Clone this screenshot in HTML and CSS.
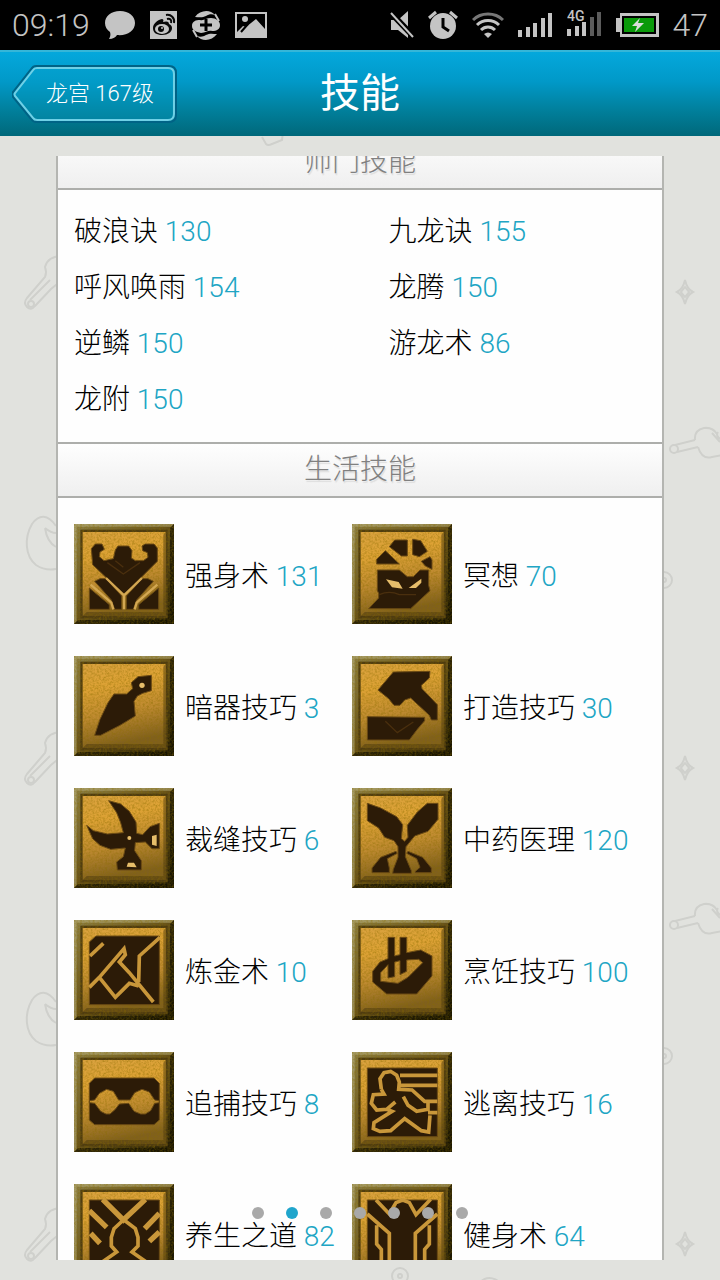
FILE: index.html
```html
<!DOCTYPE html>
<html lang="zh-CN">
<head>
    <meta charset="UTF-8">
    <meta name="viewport" content="width=device-width, initial-scale=1">
    <title>技能</title>
    <link rel="stylesheet" href="styles.css">
</head>
<body>

    <!-- shared stone plate behind every skill icon -->
    <svg class="defs" aria-hidden="true">
        <defs>
            <linearGradient id="frame" x1="0" y1="0" x2="1" y2="1">
                <stop offset="0" stop-color="#8d8045"/>
                <stop offset="0.5" stop-color="#655018"/>
                <stop offset="1" stop-color="#1c1703"/>
            </linearGradient>
            <linearGradient id="face" x1="0" y1="0" x2="0.2" y2="1">
                <stop offset="0" stop-color="#d9a13f"/>
                <stop offset="0.3" stop-color="#dda235"/>
                <stop offset="0.65" stop-color="#bd8930"/>
                <stop offset="1" stop-color="#80601d"/>
            </linearGradient>
            <filter id="grain" x="0" y="0" width="1" height="1">
                <feTurbulence type="fractalNoise" baseFrequency="0.16" numOctaves="3" seed="4"/>
                <feColorMatrix values="0 0 0 0 0.25  0 0 0 0 0.15  0 0 0 0 0  1.6 0 0 0 -0.6"/>
            </filter>
            <symbol id="plate" viewBox="0 0 300 300">
                <rect width="300" height="300" fill="url(#frame)"/>
                <path d="M0 0H300L292 8H8V292L0 300z" fill="#b5ad7c" opacity="0.6"/>
                <path d="M300 0V300H0L12 288H288V12z" fill="#161302" opacity="0.7"/>
                <rect x="19" y="17" width="262" height="266" fill="#4f3c10"/>
                <rect x="26" y="24" width="249" height="252" fill="url(#face)"/>
                <path d="M26 276H275V24L268 32V264H38z" fill="#4a370c" opacity="0.5"/>
                <rect width="300" height="300" filter="url(#grain)" opacity="0.6"/>
            </symbol>
        </defs>
    </svg>

    <div class="status-bar">
        <div class="status-group">
            <span class="clock">09:19</span>
            <svg width="32" height="32" viewBox="0 0 32 32"><path d="M16 2C7 2 1 7 1 14c0 4 2 7 5 9 1 3 0 5-1 7 4 0 7-2 8-4 10 1 18-4 18-12C31 7 25 2 16 2z" fill="#c4c4c4"/></svg>
            <svg width="27" height="28" viewBox="0 0 27 28">
                <rect width="27" height="28" fill="#c4c4c4"/>
                <path d="M12 8c-5 1-9 5-9 9 0 5 4 7 9 7 6 0 10-3 10-7 0-2-1-3-3-4 0-3-3-3-6-2 1-2 0-3-1-3z" fill="#080808"/>
                <ellipse cx="12" cy="18" rx="7" ry="5" fill="#c4c4c4"/>
                <circle cx="11" cy="18" r="3" fill="#080808"/>
                <circle cx="12" cy="17" r="1" fill="#c4c4c4"/>
                <path d="M17 8c3-1 5 1 4 4M16 4c5-1 9 3 8 8" fill="none" stroke="#080808" stroke-width="2"/>
            </svg>
            <svg width="30" height="30" viewBox="0 0 30 30">
                <path d="M1 16C1 11 5 10 9 10c4 1 6-2 11-2 5 0 9 3 9 7s-3 6-8 6c-4-1-6 2-11 2-5-1-9-3-9-7z" fill="#c4c4c4"/>
                <path d="M4 7C9 0 19-1 24 5c-3-1-6-1-9 1-4 2-7 1-11 1zM26 24c-5 7-15 8-20 2 3 1 6 1 9-1 4-2 7-1 11-1z" fill="#c4c4c4"/>
                <path d="M24 4l4 7M6 27l-4-7" stroke="#c4c4c4" stroke-width="2"/>
                <path d="M15 9v12M9 15h12" stroke="#000" stroke-width="3"/>
            </svg>
            <svg width="32" height="26" viewBox="0 0 32 26">
                <rect x="1" y="1" width="30" height="24" fill="#000" stroke="#c4c4c4" stroke-width="2"/>
                <path d="M2 20l6-6 3 1 10-8 9 10v7H2z" fill="#c4c4c4"/>
                <path d="M6 20l7-8" stroke="#000" stroke-width="2"/>
                <circle cx="10" cy="7" r="3" fill="#c4c4c4"/>
            </svg>
        </div>
        <div class="status-group">
            <svg width="24" height="28" viewBox="0 0 24 28">
                <path d="M1 9h7l10-9v27l-10-8H1z" fill="#c4c4c4"/>
                <path d="M0 1l24 25" stroke="#000" stroke-width="6"/>
                <path d="M1 2l22 24" stroke="#c4c4c4" stroke-width="2"/>
            </svg>
            <svg width="30" height="30" viewBox="0 0 30 30">
                <circle cx="15" cy="16" r="13" fill="#c4c4c4"/>
                <path d="M1 8l7-6M29 8l-7-6" stroke="#c4c4c4" stroke-width="3"/>
                <path d="M15 8v9l6 4" fill="none" stroke="#000" stroke-width="3"/>
            </svg>
            <svg width="32" height="26" viewBox="0 0 32 26" fill="none" stroke="#c4c4c4" stroke-width="3">
                <path d="M1 8C9 0 23 0 31 8" stroke="#777"/>
                <path d="M5 13c6-6 16-6 22 0M9 18c4-4 10-4 14 0"/>
                <path d="M16 26l-4-4q4-3 8 0z" fill="#c4c4c4" stroke="none"/>
            </svg>
            <svg width="35" height="26" viewBox="0 0 35 26" fill="#c4c4c4"><path d="M0 18h4v7H0zM8 15h4v10H8zM15 11h4v14h-4zM23 6h4v19h-4zM30 1h4v24h-4z"/></svg>
            <svg width="35" height="30" viewBox="0 0 35 30" fill="#c4c4c4">
                <path d="M0 19h4v7H0zM8 16h4v10H8zM15 12h4v14h-4z"/>
                <path d="M23 7h4v19h-4zM30 2h4v24h-4z" fill="#5c5c5c"/>
                <text class="net-label" x="0" y="11">4G</text>
            </svg>
            <svg width="43" height="24" viewBox="0 0 43 24">
                <path d="M0 5h4V0h39v24H4v-5H0z" fill="#c4c4c4"/>
                <rect x="6" y="3" width="34" height="18" fill="#000"/>
                <rect x="8" y="5" width="30" height="14" fill="#0a9a0a"/>
                <path d="M24 5l-8 8h5l-2 6 9-9h-6z" fill="#ddd"/>
            </svg>
            <span class="clock">47</span>
        </div>
    </div>

    <header>
        <a class="back" href="#role">
            <svg class="back-shape" viewBox="0 0 164 58" preserveAspectRatio="none" aria-hidden="true">
                <path d="M24 1h132q7 0 7 7v42q0 7-7 7H24q-3 0-5-3L1 32q-2-3 0-5L19 4q2-3 5-3z" fill="none" stroke="#006386" stroke-width="2"/>
                <path d="M25 3h130q6 0 6 6v40q0 6-6 6H25q-3 0-4-2L3 31q-1-2 0-3L21 5q1-2 4-2z" fill="#08a2ca" fill-opacity="0.3" stroke="#6fd0e6" stroke-width="2"/>
            </svg>
            龙宫 167级
        </a>
        <h1>技能</h1>
    </header>

    <main>
        <svg class="doodles" aria-hidden="true">
            <defs>
                <pattern id="doodle" width="720" height="476" patternUnits="userSpaceOnUse">
                    <g fill="none" stroke="#cfd0cc" stroke-width="2">
                        <path d="M262 1l4 7q2 2 6 0l10-4 1-8"/>
                        <path d="M62 120q-14 0-17 11 2 5 0 10l-18 21q-4 5 0 9t8-1l16-17 11-9M50 144l-20 20"/>
                        <circle cx="31" cy="168" r="3"/>
                        <path d="M56 390c-8-12-17-12-24-2-8 14-7 32 4 41q9 6 20 4M45 392q2 14 11 19M45 392q6 5 11 5"/>
                        <path d="M685 144q2 9 8 12-6 3-8 12-2-9-8-12 6-3 8-12zM685 151l4 5-4 5-4-5z"/>
                        <path d="M675 309l20-5M677 316l21-5M695 304q-1-10 9-12 9-1 13 6M698 311q4 13 14 10l10-2M712 297l8 9M718 296q-3 4 4 8"/>
                        <circle cx="674" cy="313" r="4"/>
                        <circle cx="664" cy="444" r="8"/>
                        <circle cx="664" cy="444" r="2"/>
                        <circle cx="400" cy="188" r="8"/>
                        <circle cx="400" cy="188" r="2"/>
                        <path d="M480 194q10-9 22 2"/>
                    </g>
                </pattern>
            </defs>
            <rect width="100%" height="100%" fill="url(#doodle)"/>
        </svg>

        <div class="panel">
            <div class="panel-scroll">
                <h2>师门技能</h2>
                <ul class="school-skills">
                    <li>破浪诀 <span>130</span></li>
                    <li>九龙诀 <span>155</span></li>
                    <li>呼风唤雨 <span>154</span></li>
                    <li>龙腾 <span>150</span></li>
                    <li>逆鳞 <span>150</span></li>
                    <li>游龙术 <span>86</span></li>
                    <li>龙附 <span>150</span></li>
                </ul>

                <h2>生活技能</h2>
                <ul class="life-skills">
                    <li>
                        <svg class="skill-icon" viewBox="0 0 300 300">
                            <use href="#plate"/>
                            <g class="glyph">
                                <path d="M52 74L64 60H84L91 76 78 84 76 98 90 110 118 104 124 78 132 66H164L174 80 172 102 184 110H208L222 100 220 86 206 80 204 66 214 60H240L250 72V112L154 208H146L56 122z"/>
                                <path d="M62 172L78 164H96L143 216V256H122L112 228zM238 172L222 164H204L157 216V256H178L188 228zM46 192L106 242V256H46zM254 192L194 242V256H254z"/>
                            </g>
                            <path class="scratch" d="M100 116l48 34 50-34M124 110l24 20"/>
                            <path class="glint" d="M50 182L112 236 118 256M250 182L188 236 182 256M96 162L150 214 204 162M150 214V256"/>
                        </svg>
                        <p>强身术 <span>131</span></p>
                    </li>
                    <li>
                        <svg class="skill-icon" viewBox="0 0 300 300">
                            <use href="#plate"/>
                            <g class="glyph">
                                <path d="M74 116V106L100 80 142 120H74zM112 68L128 48H166V96H148zM182 46L206 50 226 82 202 98 182 92zM208 112L234 98 240 108V136L220 126z"/>
                                <path d="M76 138H142L166 158H184L204 138H230V184L234 200 176 254H50L80 222V208L76 200z"/>
                            </g>
                            <path class="pin" d="M102 166l18 24 32 4-12-20zM170 192h22l16-16v-12z"/>
                            <path class="scratch" d="M82 212q30-14 60 0h50"/>
                        </svg>
                        <p>冥想 <span>70</span></p>
                    </li>
                    <li>
                        <svg class="skill-icon" viewBox="0 0 300 300">
                            <use href="#plate"/>
                            <path class="glyph" d="M62 238L78 190 102 140 120 114H158L176 98 172 80 192 62 232 58V104L206 112 190 120 180 136 184 180 138 208 80 238z"/>
                            <circle class="pin" cx="204" cy="88" r="8"/>
                        </svg>
                        <p>暗器技巧 <span>3</span></p>
                    </li>
                    <li>
                        <svg class="skill-icon" viewBox="0 0 300 300">
                            <use href="#plate"/>
                            <path class="glyph" d="M78 102L124 48 234 46 232 66 208 88 210 98 256 146V192H238L232 178 176 126 158 132 144 148H126L110 128zM46 182L218 184V194L196 220 172 252H46z"/>
                            <path class="scratch" d="M100 196l36 34 48-32"/>
                        </svg>
                        <p>打造技巧 <span>30</span></p>
                    </li>
                    <li>
                        <svg class="skill-icon" viewBox="0 0 300 300">
                            <use href="#plate"/>
                            <path class="glyph" d="M104 38L140 48 166 70 186 102 188 136 206 140 228 116 256 106V182H234L214 162 184 164 182 188 202 218V246H130L128 222 148 206 154 180 110 184 78 172 56 152 38 112 58 128 100 138 148 134 140 104 128 74z"/>
                            <circle class="pin" cx="166" cy="150" r="6"/>
                            <path class="pin" d="M234 144v26l14 4v-34zM158 236l4-12h18l8 14z"/>
                        </svg>
                        <p>裁缝技巧 <span>6</span></p>
                    </li>
                    <li>
                        <svg class="skill-icon" viewBox="0 0 300 300">
                            <use href="#plate"/>
                            <path class="glyph" d="M46 46L86 60 134 86 152 110 148 152 158 160 168 148 166 112 196 72 226 46H258V94L228 130 188 144 162 176 160 206 178 248V256H122L124 244 138 208V176L126 158 98 148 80 120 46 98zM60 254V240L86 208 132 190 136 196 106 212 112 240V254zM238 254V240L212 208 168 190 164 196 194 212 204 238 190 250V254z"/>
                        </svg>
                        <p>中药医理 <span>120</span></p>
                    </li>
                    <li>
                        <svg class="skill-icon" viewBox="0 0 300 300">
                            <use href="#plate"/>
                            <path class="glyph" d="M46 66L66 48H256V254H46z"/>
                            <path class="line" d="M48 108L88 70M46 202L76 172 150 86 154 104 136 126 166 158 238 246M76 172L124 232 166 190 194 198M258 52L196 108 194 186"/>
                        </svg>
                        <p>炼金术 <span>10</span></p>
                    </li>
                    <li>
                        <svg class="skill-icon" viewBox="0 0 300 300">
                            <use href="#plate"/>
                            <path class="glyph" fill-rule="evenodd" d="M62 154L84 126 108 116V52H128V108L144 104V52H164V98L206 90 240 108V168L194 222H104L62 186zM86 158V184L138 190 168 172 212 128 200 118 164 120V154L144 164V122L128 126V170L108 174V134z"/>
                        </svg>
                        <p>烹饪技巧 <span>100</span></p>
                    </li>
                    <li>
                        <svg class="skill-icon" viewBox="0 0 300 300">
                            <use href="#plate"/>
                            <path class="glyph" fill-rule="evenodd" d="M46 94L62 78H240L256 94V204L240 218H62L46 204zM46 146V152L62 154 80 178 96 186H108L124 172 136 156 164 154 180 178 200 186H214L230 176 242 154 256 152V146L242 144 226 120 204 112 182 122 168 144H134L118 118 98 112 76 124 62 144z"/>
                        </svg>
                        <p>追捕技巧 <span>8</span></p>
                    </li>
                    <li>
                        <svg class="skill-icon" viewBox="0 0 300 300">
                            <use href="#plate"/>
                            <path class="glyph" d="M46 48H256V254H46z"/>
                            <path class="line" d="M144 70H256M144 100H256M88 112L84 80 96 62 116 58 134 70 142 90 140 112 180 114 218 148H256M88 112L96 126 64 128 58 154 74 174 104 172 130 150M154 134L168 160 194 178 228 172V148M228 182H256M104 172L120 178 66 212 64 230 84 238 116 236 158 200 208 236 230 240 234 190"/>
                        </svg>
                        <p>逃离技巧 <span>16</span></p>
                    </li>
                    <li>
                        <svg class="skill-icon" viewBox="0 0 300 300">
                            <use href="#plate"/>
                            <path class="glyph" d="M46 48H256V254H46z"/>
                            <path class="line wide" d="M86 46L148 108 214 46M46 80L98 130M256 88L212 134M50 148L78 178M256 144L226 172"/>
                            <path class="line" d="M148 108L120 134 112 160V186L128 204 82 236M150 108L184 134 192 160V186L174 204 220 236"/>
                        </svg>
                        <p>养生之道 <span>82</span></p>
                    </li>
                    <li>
                        <svg class="skill-icon" viewBox="0 0 300 300">
                            <use href="#plate"/>
                            <path class="glyph" d="M46 48H256V254H46z"/>
                            <path class="line" d="M72 48L112 90 132 56 152 48 172 56 192 92 236 46M46 90L112 148V256M256 90L190 148V256M74 124V180L88 196V256M232 124V180L218 196V256"/>
                        </svg>
                        <p>健身术 <span>64</span></p>
                    </li>
                </ul>
            </div>
        </div>

        <nav class="pager">
            <button aria-label="1"></button>
            <button class="active" aria-label="2"></button>
            <button aria-label="3"></button>
            <button aria-label="4"></button>
            <button aria-label="5"></button>
            <button aria-label="6"></button>
            <button aria-label="7"></button>
        </nav>
    </main>

</body>
</html>
```
FILE: styles.css
```css
* {
    box-sizing: border-box;
}

body {
    font-family: Roboto, "Noto Sans CJK SC", sans-serif;
    font-weight: 300;
    font-size: 28px;
    background: #e1e2de;
    color: #000;
    margin: 0;
    height: 100vh;
    display: flex;
    flex-direction: column;
    overflow: hidden;
}

h1, h2, p, ul {
    margin: 0;
    padding: 0;
    font-weight: inherit;
}

ul {
    list-style: none;
}

.defs {
    position: absolute;
    width: 0;
    height: 0;
}

/* phone status bar */
.status-bar {
    background: #000;
    color: #c4c4c4;
    height: 50px;
    padding: 0 12px;
    display: flex;
    justify-content: space-between;
    align-items: center;
    flex-shrink: 0;
}

.status-group {
    display: flex;
    align-items: center;
    gap: 14px;
}

.clock {
    font-size: 32px;
    line-height: 50px;
}

.net-label {
    font-size: 14px;
    font-weight: 500;
}

/* title bar */
header {
    position: relative;
    z-index: 0;
    height: 86px;
    padding: 0 12px;
    display: grid;
    grid-template-columns: 1fr auto 1fr;
    align-items: center;
    flex-shrink: 0;
    background: linear-gradient(#04a8dc, #0199c8 35%, #017f9b 70%, #00687a);
    border-top: 2px solid #35b6d8;
    color: #fff;
}

header h1 {
    font-size: 40px;
    line-height: 56px;
    font-weight: 400;
}

.back {
    position: relative;
    justify-self: start;
    padding: 0 23px 0 34px;
    font-size: 22px;
    line-height: 58px;
    color: #fff;
    text-decoration: none;
    white-space: nowrap;
}

.back-shape {
    position: absolute;
    inset: 0;
    width: 100%;
    height: 100%;
    z-index: -1;
}

/* content */
main {
    position: relative;
    flex: 1;
    min-height: 0;
    padding: 20px 56px;
}

.doodles {
    position: absolute;
    inset: 0;
    width: 100%;
    height: 100%;
}

.panel {
    position: relative;
    height: 100%;
    overflow: hidden;
    background: #fefefe;
    border: solid #b4b5b1;
    border-width: 0 2px;
}

/* list is scrolled down a little */
.panel-scroll {
    margin-top: -22px;
}

h2 {
    height: 56px;
    border: solid #adaeab;
    border-width: 2px 0;
    background: linear-gradient(#fefefe, #efefef);
    color: #808080;
    font-size: 28px;
    line-height: 52px;
    text-align: center;
    text-shadow: 1px 2px 1px #ddd;
}

li span {
    color: #20a5c4;
}

.school-skills {
    display: grid;
    grid-template-columns: 11fr 9fr;
    padding: 14px 16px;
    line-height: 56px;
}

.life-skills {
    display: grid;
    grid-template-columns: 1fr 1fr;
    row-gap: 32px;
    padding: 26px 32px 26px 16px;
}

.life-skills li {
    display: flex;
    align-items: center;
    gap: 11px;
    white-space: nowrap;
}

.skill-icon {
    width: 100px;
    height: 100px;
    flex-shrink: 0;
}

.glyph {
    fill: #2c1b07;
    stroke: #6a4a14;
    stroke-width: 3;
}

.scratch {
    fill: none;
    stroke: #4a2f0e;
    stroke-width: 4;
}

.glint {
    fill: none;
    stroke: #d3a752;
    stroke-width: 7;
}

.pin {
    fill: #e6bd6a;
}

.line {
    fill: none;
    stroke: #c9973a;
    stroke-width: 11;
}

.wide {
    stroke-width: 16;
}

/* page dots */
.pager {
    position: absolute;
    left: 0;
    right: 0;
    bottom: 61px;
    display: flex;
    justify-content: center;
    gap: 22px;
}

.pager button {
    width: 12px;
    height: 12px;
    padding: 0;
    border: none;
    border-radius: 50%;
    background: #a9a9a9;
    cursor: pointer;
}

.pager .active {
    background: #20a5cc;
}
```
